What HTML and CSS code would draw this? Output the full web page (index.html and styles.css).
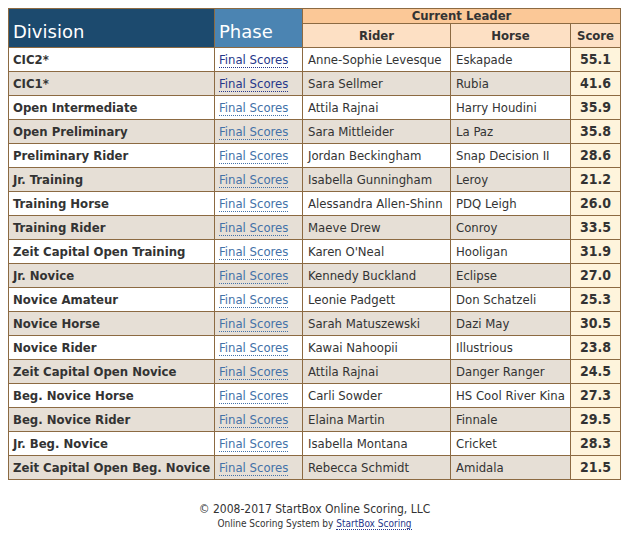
FILE: index.html
```html
<!DOCTYPE html>
<html>
<head>
<meta charset="utf-8">
<link rel="stylesheet" href="styles.css">
</head>
<body>
<table class="results">
  <colgroup>
    <col class="c-div"><col class="c-phase"><col class="c-rider"><col class="c-horse"><col class="c-score">
  </colgroup>
  <thead>
    <tr class="h1">
      <th rowspan="2" class="h-div">Division</th>
      <th rowspan="2" class="h-phase">Phase</th>
      <th colspan="3" class="h-leader">Current Leader</th>
    </tr>
    <tr class="h2">
      <th class="h-sub">Rider</th>
      <th class="h-sub">Horse</th>
      <th class="h-sub">Score</th>
    </tr>
  </thead>
  <tbody>
    <tr><td class="div">CIC2*</td><td class="phase"><a class="lnk visited" href="#">Final Scores</a></td><td>Anne-Sophie Levesque</td><td>Eskapade</td><td class="score">55.1</td></tr>
    <tr class="alt"><td class="div">CIC1*</td><td class="phase"><a class="lnk visited" href="#">Final Scores</a></td><td>Sara Sellmer</td><td>Rubia</td><td class="score">41.6</td></tr>
    <tr><td class="div">Open Intermediate</td><td class="phase"><a class="lnk" href="#">Final Scores</a></td><td>Attila Rajnai</td><td>Harry Houdini</td><td class="score">35.9</td></tr>
    <tr class="alt"><td class="div">Open Preliminary</td><td class="phase"><a class="lnk" href="#">Final Scores</a></td><td>Sara Mittleider</td><td>La Paz</td><td class="score">35.8</td></tr>
    <tr><td class="div">Preliminary Rider</td><td class="phase"><a class="lnk" href="#">Final Scores</a></td><td>Jordan Beckingham</td><td>Snap Decision II</td><td class="score">28.6</td></tr>
    <tr class="alt"><td class="div">Jr. Training</td><td class="phase"><a class="lnk" href="#">Final Scores</a></td><td>Isabella Gunningham</td><td>Leroy</td><td class="score">21.2</td></tr>
    <tr><td class="div">Training Horse</td><td class="phase"><a class="lnk" href="#">Final Scores</a></td><td>Alessandra Allen-Shinn</td><td>PDQ Leigh</td><td class="score">26.0</td></tr>
    <tr class="alt"><td class="div">Training Rider</td><td class="phase"><a class="lnk" href="#">Final Scores</a></td><td>Maeve Drew</td><td>Conroy</td><td class="score">33.5</td></tr>
    <tr><td class="div">Zeit Capital Open Training</td><td class="phase"><a class="lnk" href="#">Final Scores</a></td><td>Karen O'Neal</td><td>Hooligan</td><td class="score">31.9</td></tr>
    <tr class="alt"><td class="div">Jr. Novice</td><td class="phase"><a class="lnk" href="#">Final Scores</a></td><td>Kennedy Buckland</td><td>Eclipse</td><td class="score">27.0</td></tr>
    <tr><td class="div">Novice Amateur</td><td class="phase"><a class="lnk" href="#">Final Scores</a></td><td>Leonie Padgett</td><td>Don Schatzeli</td><td class="score">25.3</td></tr>
    <tr class="alt"><td class="div">Novice Horse</td><td class="phase"><a class="lnk" href="#">Final Scores</a></td><td>Sarah Matuszewski</td><td>Dazi May</td><td class="score">30.5</td></tr>
    <tr><td class="div">Novice Rider</td><td class="phase"><a class="lnk" href="#">Final Scores</a></td><td>Kawai Nahoopii</td><td>Illustrious</td><td class="score">23.8</td></tr>
    <tr class="alt"><td class="div">Zeit Capital Open Novice</td><td class="phase"><a class="lnk" href="#">Final Scores</a></td><td>Attila Rajnai</td><td>Danger Ranger</td><td class="score">24.5</td></tr>
    <tr><td class="div">Beg. Novice Horse</td><td class="phase"><a class="lnk" href="#">Final Scores</a></td><td>Carli Sowder</td><td>HS Cool River Kina</td><td class="score">27.3</td></tr>
    <tr class="alt"><td class="div">Beg. Novice Rider</td><td class="phase"><a class="lnk" href="#">Final Scores</a></td><td>Elaina Martin</td><td>Finnale</td><td class="score">29.5</td></tr>
    <tr><td class="div">Jr. Beg. Novice</td><td class="phase"><a class="lnk" href="#">Final Scores</a></td><td>Isabella Montana</td><td>Cricket</td><td class="score">28.3</td></tr>
    <tr class="alt"><td class="div">Zeit Capital Open Beg. Novice</td><td class="phase"><a class="lnk" href="#">Final Scores</a></td><td>Rebecca Schmidt</td><td>Amidala</td><td class="score">21.5</td></tr>
  </tbody>
</table>
<div class="footer">
  <div class="copy">© 2008-2017 StartBox Online Scoring, LLC</div>
  <div class="sys">Online Scoring System by <a class="flink" href="#">StartBox Scoring</a></div>
</div>
</body>
</html>
```
FILE: styles.css
```css
html, body {
  background: #ffffff;
}
body {
  margin: 8px;
  font-family: "DejaVu Sans Condensed", "DejaVu Sans", sans-serif;
  font-size: 13px;
  color: #333333;
}
.results {
  border-collapse: collapse;
  width: 612px;
  table-layout: fixed;
  border: 1px solid #8c6a42;
}
.c-div { width: 206px; }
.c-phase { width: 88px; }
.c-rider { width: 148px; }
.c-horse { width: 120px; }
.c-score { width: 50px; }
.results th, .results td {
  border: 1px solid #8c6a42;
  padding: 0 5px;
  white-space: nowrap;
  overflow: hidden;
}
.results td {
  height: 23px;
  line-height: 23px;
}
.h-div, .h-phase {
  text-align: left;
  vertical-align: bottom;
  color: #ffffff;
  font-weight: normal;
  font-size: 18px;
  line-height: 20px;
  font-family: "DejaVu Sans", sans-serif;
  padding: 0 4px 5px 4px !important;
}
.h-div { background: #1c4a6e; }
.h-phase { background: #4b84b2; }
.h-leader {
  background: #fbc897;
  height: 14px;
  line-height: 14px;
  font-size: 13px;
  font-weight: bold;
}
.h-sub {
  background: #fde0c4;
  height: 23px;
  line-height: 23px;
  font-weight: bold;
  font-size: 13px;
}
.alt td { background: #e6dfd6; }
.div { font-weight: bold; padding-left: 4px !important; }
.phase { padding-left: 4px !important; }
.score {
  background: #fef4dc !important;
  font-weight: bold;
  text-align: center;
  font-size: 14px;
}
.lnk {
  color: #4472a8;
  text-decoration: none;
  border-bottom: 1px dotted #4472a8;
}
.lnk.visited {
  color: #26378a;
  border-bottom-color: #26378a;
}
.footer {
  text-align: center;
  margin-top: 22px;
  color: #333333;
}
.copy {
  font-size: 12px;
  line-height: 15px;
}
.sys {
  font-size: 10px;
  line-height: 13px;
}
.flink {
  color: #26378a;
  text-decoration: none;
  border-bottom: 1px dotted #26378a;
}
```
